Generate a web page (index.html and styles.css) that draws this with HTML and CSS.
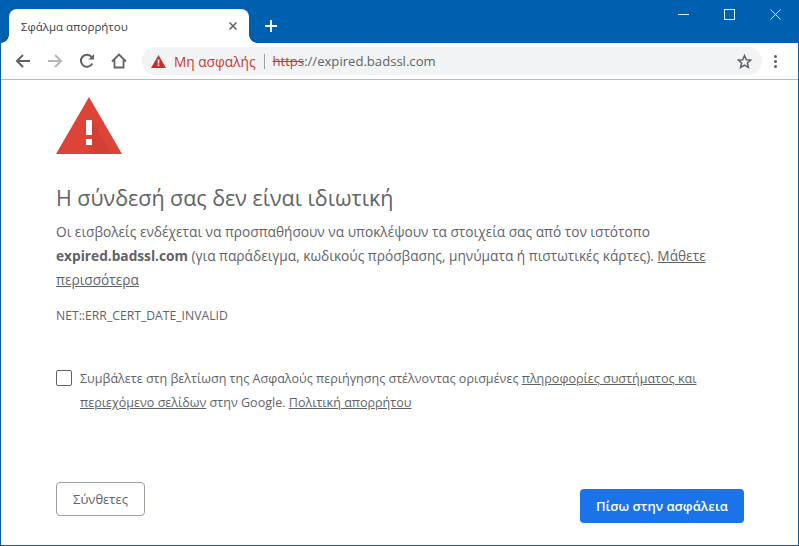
FILE: index.html
```html
<!DOCTYPE html>
<html lang="el">
  <head>
    <meta charset="UTF-8" />
    <title>Σφάλμα απορρήτου</title>
    <link rel="stylesheet" href="styles.css">
  </head>
  <body>
    <div class="window">
      <div class="titlebar">
        <div class="tab">
          <span class="tab-title">Σφάλμα απορρήτου</span>
          <svg class="tab-close" width="8" height="8" viewBox="0 0 8 8"><path d="M0.500 0.500l7 7M7.500 0.500l-7 7" stroke="#5f6368" stroke-width="1.500" fill="none"/></svg>
        </div>
        <svg class="new-tab" width="12" height="12" viewBox="0 0 12 12"><path d="M6 0v12M0 6h12" stroke="#fff" stroke-width="1.800" fill="none"/></svg>
        <div class="win-controls">
          <svg width="11" height="11" viewBox="0 0 11 11"><path d="M0 5.500h11" stroke="#dff0fb" fill="none"/></svg>
          <svg width="11" height="11" viewBox="0 0 11 11"><rect x="0.500" y="0.500" width="10" height="10" stroke="#dff0fb" fill="none"/></svg>
          <svg width="11" height="11" viewBox="0 0 11 11"><path d="M0.500 0.500l10 10M10.500 0.500l-10 10" stroke="#dff0fb" fill="none"/></svg>
        </div>
      </div>

      <div class="toolbar">
        <svg class="nav-icon" width="16" height="16" viewBox="0 0 16 16"><path d="M15 8H2M8 2L2 8l6 6" stroke="#5f6368" stroke-width="2" fill="none"/></svg>
        <svg class="nav-icon" width="16" height="16" viewBox="0 0 16 16"><path d="M1 8h13M8 2l6 6-6 6" stroke="#b4b7ba" stroke-width="2" fill="none"/></svg>
        <svg class="nav-icon" width="16" height="16" viewBox="0 0 16 16"><path d="M13.300 10.500A6 6 0 1 1 12.600 4" stroke="#5f6368" stroke-width="2" fill="none"/><path d="M9.500 6.500H15V1z" fill="#5f6368"/></svg>
        <svg class="nav-icon" width="16" height="16" viewBox="0 0 16 16"><path d="M1 8.500L8 1.500l7 7M3.500 7v7.500h9V7" stroke="#5f6368" stroke-width="1.800" fill="none"/></svg>
        <div class="omnibox">
          <svg class="warn-small" width="15" height="13" viewBox="0 0 15 13"><path d="M7.500 0L15 13H0z" fill="#c5302a"/><path d="M6.700 4.500h1.600v4H6.700zM6.700 9.500h1.600v1.600H6.700z" fill="#fff"/></svg>
          <span class="not-secure">Μη ασφαλής</span>
          <span class="omni-sep"></span>
          <span class="url"><span class="url-scheme">https</span>://expired.badssl.com</span>
          <svg class="star" width="15" height="15" viewBox="0 0 15 15"><path d="M7.500 1.600l1.800 4.100 4.400.4-3.300 2.900 1 4.400-3.900-2.300-3.900 2.300 1-4.400L1.300 6.100l4.400-.4z" stroke="#5f6368" stroke-width="1.500" fill="none"/></svg>
        </div>
        <div class="menu-dots"><span></span><span></span><span></span></div>
      </div>

      <div class="page">
        <svg class="warn-big" width="66" height="57" viewBox="0 0 66 57"><path d="M33 0l33 57H0z" fill="#db4437"/><path d="M36 23l20 34H36zM36 42v6h-6z" fill="#c5392f" opacity="0.350"/><path d="M30 23h6v15h-6zM30 42h6v6h-6z" fill="#fff"/></svg>
        <h1>Η σύνδεσή σας δεν είναι ιδιωτική</h1>
        <p class="main-text">Οι εισβολείς ενδέχεται να προσπαθήσουν να υποκλέψουν τα στοιχεία σας από τον ιστότοπο <strong>expired.badssl.com</strong> (για παράδειγμα, κωδικούς πρόσβασης, μηνύματα ή πιστωτικές κάρτες). <a href="#">Μάθετε περισσότερα</a></p>
        <div class="error-code">NET::ERR_CERT_DATE_INVALID</div>
        <div class="opt-in">
          <span class="checkbox"></span>
          <p>Συμβάλετε στη βελτίωση της Ασφαλούς περιήγησης στέλνοντας ορισμένες <a href="#">πληροφορίες συστήματος και περιεχόμενο σελίδων</a> στην Google. <a href="#">Πολιτική απορρήτου</a></p>
        </div>
        <div class="buttons">
          <button class="btn-advanced">Σύνθετες</button>
          <button class="btn-back">Πίσω στην ασφάλεια</button>
        </div>
      </div>
    </div>
  </body>
</html>
```

FILE: styles.css
```css
* {
  margin: 0;
  padding: 0;
  box-sizing: border-box;
}

html, body {
  width: 799px;
  height: 546px;
  overflow: hidden;
}

body {
  font-family: 'Open Sans', 'Noto Sans', sans-serif;
  background: #fff;
}

.window {
  height: 546px;
  display: flex;
  flex-direction: column;
  border: solid #0a5ea8;
  border-width: 0 1px 1px 1px;
}

.titlebar {
  height: 43px;
  flex: none;
  margin: 0 -1px;
  background: #0060b0;
  display: flex;
  align-items: flex-end;
  padding-left: 9px;
}

.tab {
  position: relative;
  width: 240px;
  height: 34px;
  background: #fff;
  border-radius: 8px 8px 0 0;
  display: flex;
  align-items: center;
  justify-content: space-between;
  padding: 0 12px 0 12px;
}

/* flared corners at the foot of the tab */
.tab::before,
.tab::after {
  content: "";
  position: absolute;
  bottom: 0;
  width: 8px;
  height: 8px;
}

.tab::before {
  left: -8px;
  background: radial-gradient(circle at 0 0, #0060b0 7.500px, #fff 8px);
}

.tab::after {
  right: -8px;
  background: radial-gradient(circle at 100% 0, #0060b0 7.500px, #fff 8px);
}

.tab-title {
  font-size: 11.500px;
  color: #3c4043;
}

.new-tab {
  margin: 0 0 11px 16px;
}

.win-controls {
  margin-left: auto;
  align-self: flex-start;
  display: flex;
  gap: 35px;
  padding: 9px 18px 0 0;
}

.toolbar {
  height: 37px;
  flex: none;
  display: flex;
  align-items: center;
  padding-left: 14px;
  border-bottom: 1px solid #b8babc;
}

.nav-icon {
  margin-right: 16px;
}

.omnibox {
  width: 620px;
  height: 28px;
  margin-left: -1px;
  background: #f1f3f4;
  border-radius: 14px;
  display: flex;
  align-items: center;
  padding-left: 9px;
}

.warn-small {
  margin-right: 8px;
}

.not-secure {
  font-size: 13.700px;
  color: #c5392f;
}

.omni-sep {
  width: 1px;
  height: 15px;
  background: #9aa0a6;
  margin: 0 8px;
}

.url {
  font-size: 13.100px;
  color: #5f6368;
}

.url-scheme {
  color: #c5392f;
  text-decoration: line-through;
}

.star {
  margin-left: auto;
  margin-right: 10px;
}

.menu-dots {
  margin-left: 12px;
  display: flex;
  flex-direction: column;
  gap: 2px;
}

.menu-dots span {
  width: 3px;
  height: 3px;
  background: #5f6368;
  border-radius: 50%;
}

.page {
  flex: 1;
  display: flex;
  flex-direction: column;
  padding: 17px 54px 0 55px;
  color: #5f6368;
  font-size: 13.700px;
  line-height: 24px;
}

.warn-big {
  flex: none;
}

h1 {
  font-size: 21.450px;
  font-weight: 400;
  line-height: 28px;
  margin-top: 30px;
}

.main-text {
  margin-top: 8px;
}

.main-text strong {
  font-weight: 700;
}

.page a {
  color: #5f6368;
  text-decoration: underline;
}

.error-code {
  font-size: 12.200px;
  margin-top: 12px;
}

.opt-in {
  display: flex;
  margin-top: 39px;
  font-size: 12.550px;
}

.checkbox {
  flex: none;
  width: 16px;
  height: 16px;
  margin: 3px 8px 0 0;
  border: 1px solid #5f6368;
  border-radius: 2px;
}

.buttons {
  margin-top: auto;
  margin-bottom: 22px;
  display: flex;
  justify-content: space-between;
  align-items: flex-end;
}

.btn-advanced {
  width: 89px;
  height: 34px;
  margin-bottom: 7px;
  font: 13px 'Open Sans', 'Noto Sans', sans-serif;
  color: #5f6368;
  background: #fff;
  border: 1px solid #9aa0a6;
  border-radius: 4px;
}

.btn-back {
  width: 164px;
  height: 34px;
  font: 600 13px 'Open Sans', 'Noto Sans', sans-serif;
  color: #fff;
  background: #1a73e8;
  border: none;
  border-radius: 4px;
}
```
